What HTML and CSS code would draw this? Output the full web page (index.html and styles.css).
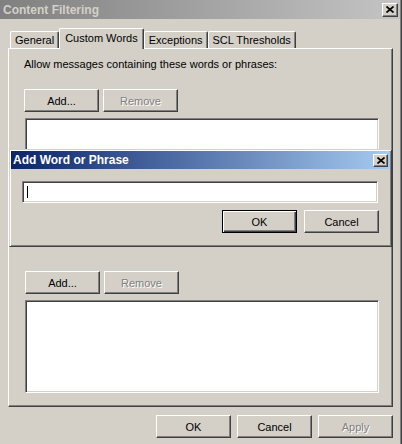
FILE: index.html
```html
<!DOCTYPE html>
<html lang="en">
<head>
  <meta charset="UTF-8">
  <title>Content Filtering</title>
  <link rel="stylesheet" href="styles.css">
</head>
<body>

  <div class="window">
    <div class="titlebar inactive">
      <span class="title">Content Filtering</span>
      <button class="close" aria-label="Close">
        <svg width="8" height="7" viewBox="0 0 8 7"><path d="M0.5 0.5l7 6M7.5 0.5l-7 6" stroke="#000" stroke-width="1.7"/></svg>
      </button>
    </div>

    <div class="tabs">
      <div class="tab">General</div>
      <div class="tab active">Custom Words</div>
      <div class="tab">Exceptions</div>
      <div class="tab">SCL Thresholds</div>
    </div>

    <div class="panel">
      <p class="label">Allow messages containing these words or phrases:</p>
      <div class="btn-row">
        <button class="btn">Add...</button>
        <button class="btn" disabled>Remove</button>
      </div>
      <div class="listbox"></div>

      <div class="btn-row lower">
        <button class="btn">Add...</button>
        <button class="btn" disabled>Remove</button>
      </div>
      <div class="listbox"></div>
    </div>

    <div class="footer">
      <button class="btn">OK</button>
      <button class="btn">Cancel</button>
      <button class="btn" disabled>Apply</button>
    </div>

    <!-- modal on top of the property sheet -->
    <div class="dialog">
      <div class="titlebar active">
        <span class="title">Add Word or Phrase</span>
        <button class="close" aria-label="Close">
          <svg width="8" height="7" viewBox="0 0 8 7"><path d="M0.5 0.5l7 6M7.5 0.5l-7 6" stroke="#000" stroke-width="1.7"/></svg>
        </button>
      </div>
      <div class="dialog-body">
        <div class="textbox"><span class="caret"></span></div>
        <div class="dialog-buttons">
          <button class="btn default">OK</button>
          <button class="btn">Cancel</button>
        </div>
      </div>
    </div>
  </div>

</body>
</html>
```

FILE: styles.css
```css
body {
  margin: 0;
  background: #d4d0c8;
  font-family: 'Liberation Sans', Arial, sans-serif;
  font-size: 11px;
  color: #000;
}

.window {
  position: relative;
  width: 402px;
  height: 444px;
  box-sizing: border-box;
  border-right: 1px solid #404040;
  box-shadow: inset -1px 0 #808080;
  overflow: hidden;
}

/* title bars */
.titlebar {
  display: flex;
  align-items: center;
  justify-content: space-between;
  height: 19px;
  padding: 0 2px 0 3px;
}

.titlebar.inactive {
  margin-right: 1px;
  background: linear-gradient(90deg, #808080, #c4c4c4);
  color: #d4d0c8;
}

.titlebar.active {
  height: 18px;
  padding: 0 2px 0 2px;
  background: linear-gradient(90deg, #0a246a, #a6caf0);
  color: #fff;
}

.title {
  font-size: 12px;
  font-weight: bold;
}

.close {
  display: flex;
  align-items: center;
  justify-content: center;
  width: 16px;
  height: 14px;
  padding: 0;
  background: #d4d0c8;
  border: 1px solid;
  border-color: #fff #404040 #404040 #fff;
  box-shadow: inset -1px -1px #808080;
}

.titlebar.active .close {
  width: 15px;
  height: 13px;
}

/* tabs */
.tabs {
  display: flex;
  align-items: flex-end;
  height: 20px;
  margin-top: 9px;
  padding-left: 10px;
}

.tab {
  height: 16px;
  line-height: 16px;
  padding: 0 4px;
  border: 1px solid;
  border-color: #fff #404040 transparent #fff;
  border-bottom: none;
  border-radius: 2px 2px 0 0;
  box-shadow: inset -1px 0 #808080;
  background: #d4d0c8;
}

.tab.active {
  position: relative;
  z-index: 1;
  height: 20px;
  line-height: 18px;
  margin-bottom: -1px;
  padding: 0 5px;
}

.panel {
  width: 385px;
  margin-left: 8px;
  padding: 9px 0 13px 15px;
  box-sizing: border-box;
  border: 1px solid;
  border-color: #fff #404040 #404040 #fff;
  box-shadow: inset -1px -1px #808080;
}

.label {
  margin: 0;
  line-height: 13px;
}

.btn-row {
  display: flex;
  gap: 4px;
  margin-top: 18px;
}

.btn-row.lower {
  margin-top: 60px;
  padding-left: 1px;
}

.btn {
  width: 75px;
  height: 23px;
  padding: 0;
  font-family: inherit;
  font-size: 11px;
  color: #000;
  background: #d4d0c8;
  border: 1px solid;
  border-color: #fff #404040 #404040 #fff;
  box-shadow: inset -1px -1px #808080;
}

.btn:disabled {
  color: #808080;
  text-shadow: 1px 1px #fff;
}

.btn.default {
  border-color: #000;
  box-shadow: inset 1px 1px #fff, inset -1px -1px #404040, inset -2px -2px #808080;
}

.listbox {
  width: 354px;
  height: 93px;
  margin-top: 6px;
  margin-left: 1px;
  box-sizing: border-box;
  background: #fff;
  border: 1px solid;
  border-color: #808080 #fff #fff #808080;
  box-shadow: inset 1px 1px #404040, inset -1px -1px #d4d0c8;
}

.footer {
  display: flex;
  justify-content: flex-end;
  gap: 6px;
  margin-top: 8px;
  padding-right: 8px;
}

/* add word dialog */
.dialog {
  position: absolute;
  left: 9px;
  top: 149px;
  width: 383px;
  height: 98px;
  padding: 1px;
  box-sizing: border-box;
  background: #d4d0c8;
  border: 1px solid;
  border-color: #d4d0c8 #404040 #404040 #d4d0c8;
  box-shadow: inset 1px 1px #fff, inset -1px -1px #808080;
}

.dialog-body {
  padding: 12px 11px 0 11px;
}

.textbox {
  display: flex;
  align-items: center;
  width: 356px;
  height: 22px;
  padding-left: 4px;
  box-sizing: border-box;
  background: #fff;
  border: 1px solid;
  border-color: #808080 #fff #fff #808080;
  box-shadow: inset 1px 1px #404040, inset -1px -1px #d4d0c8;
}

.caret {
  width: 1px;
  height: 12px;
  background: #000;
}

.dialog-buttons {
  display: flex;
  justify-content: flex-end;
  gap: 7px;
  width: 357px;
  margin-top: 7px;
}
```
